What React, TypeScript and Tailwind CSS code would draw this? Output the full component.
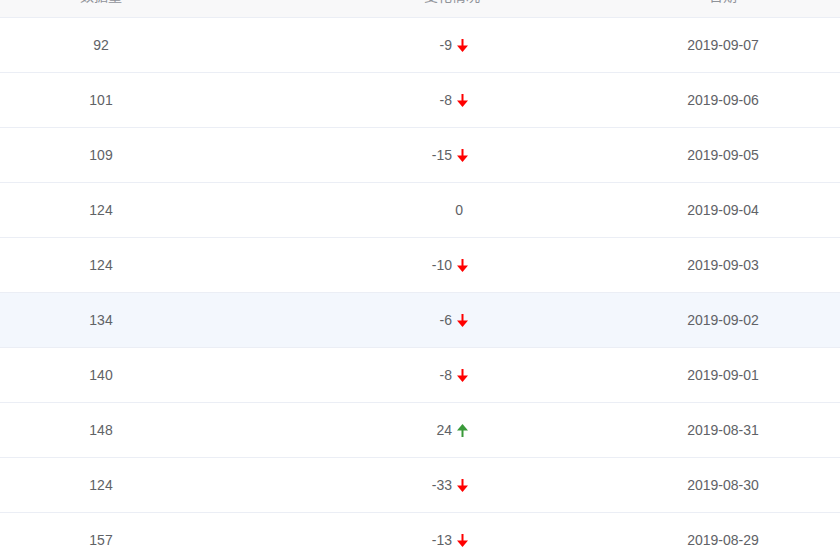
import React from 'react';

type Row = { total: number; change: number; date: string };

const rows: Row[] = [
  { total: 92, change: -9, date: '2019-09-07' },
  { total: 101, change: -8, date: '2019-09-06' },
  { total: 109, change: -15, date: '2019-09-05' },
  { total: 124, change: 0, date: '2019-09-04' },
  { total: 124, change: -10, date: '2019-09-03' },
  { total: 134, change: -6, date: '2019-09-02' },
  { total: 140, change: -8, date: '2019-09-01' },
  { total: 148, change: 24, date: '2019-08-31' },
  { total: 124, change: -33, date: '2019-08-30' },
  { total: 157, change: -13, date: '2019-08-29' },
];

const Arrow = ({ up }: { up: boolean }) => (
  <svg
    width="11"
    height="13"
    viewBox="0 0 11 13"
    className={up ? 'text-[#3a9a3a]' : 'text-[#ff0000]'}
  >
    {up ? (
      <>
        <rect x="4.5" y="5" width="2" height="8" fill="currentColor" />
        <path d="M0 6.5 L5.5 0 L11 6.5 Z" fill="currentColor" />
      </>
    ) : (
      <>
        <rect x="4.5" y="0" width="2" height="8" fill="currentColor" />
        <path d="M0 6.5 L5.5 13 L11 6.5 Z" fill="currentColor" />
      </>
    )}
  </svg>
);

const App: React.FC = () => {
  return (
    <div className="w-[840px] h-[556px] overflow-hidden bg-white font-['Liberation_Sans','Noto_Sans_CJK_SC',sans-serif] text-[14px] text-[#606266]">
      {/* crop of a wider table: first column starts off-screen */}
      <div className="-ml-[100px] w-[944px]">
        <div className="grid grid-cols-[402px_300px_242px] h-[18px] bg-[#f8f8f9] border-b border-[#ebeef5] overflow-hidden text-[#909399]">
          {['数据量', '变化情况', '日期'].map((h) => (
            <div key={h} className="text-center leading-[20px] -mt-[14px]">
              {h}
            </div>
          ))}
        </div>
        {rows.map((r, i) => (
          <div
            key={i}
            className={`grid grid-cols-[402px_300px_242px] h-[55px] items-center border-b border-[#ebeef5] ${
              i === 5 ? 'bg-[#f3f7fd]' : 'bg-white'
            }`}
          >
            <div className="text-center">{r.total}</div>
            <div className="flex items-center justify-end gap-[5px] pr-[134px]">
              <span>{r.change}</span>
              {r.change !== 0 ? <Arrow up={r.change > 0} /> : <span className="w-0" />}
            </div>
            <div className="text-center">{r.date}</div>
          </div>
        ))}
      </div>
    </div>
  );
};

export default App;
